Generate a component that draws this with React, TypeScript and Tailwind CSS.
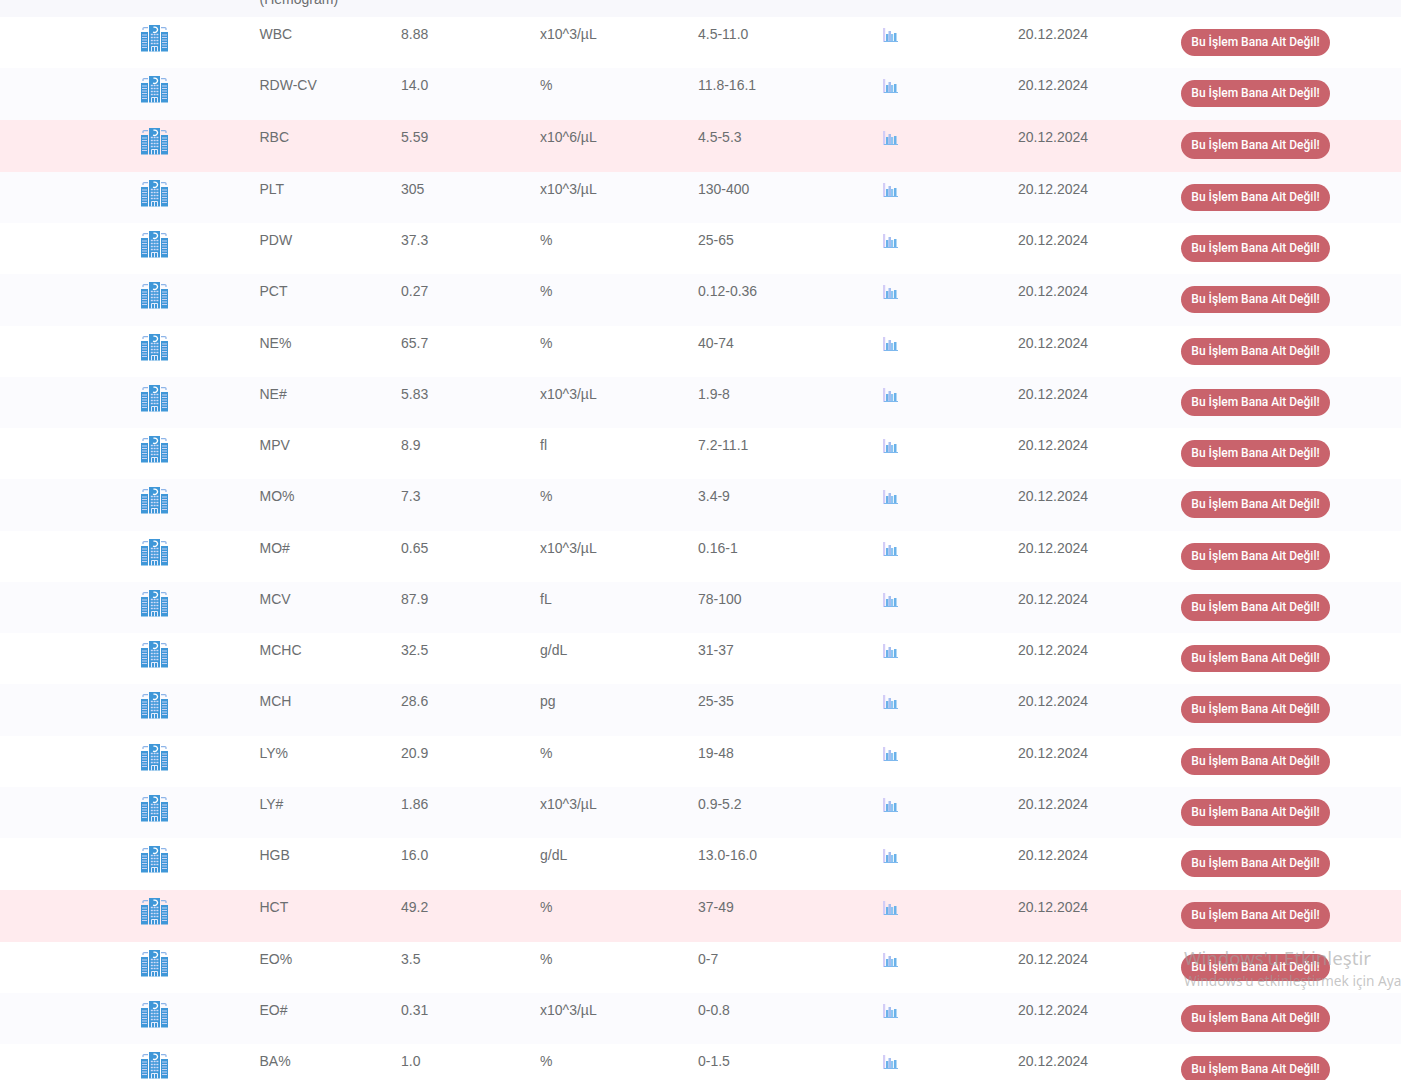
const rows: [string, string, string, string, boolean?][] = [
  ["WBC", "8.88", "x10^3/µL", "4.5-11.0"],
  ["RDW-CV", "14.0", "%", "11.8-16.1"],
  ["RBC", "5.59", "x10^6/µL", "4.5-5.3", true],
  ["PLT", "305", "x10^3/µL", "130-400"],
  ["PDW", "37.3", "%", "25-65"],
  ["PCT", "0.27", "%", "0.12-0.36"],
  ["NE%", "65.7", "%", "40-74"],
  ["NE#", "5.83", "x10^3/µL", "1.9-8"],
  ["MPV", "8.9", "fl", "7.2-11.1"],
  ["MO%", "7.3", "%", "3.4-9"],
  ["MO#", "0.65", "x10^3/µL", "0.16-1"],
  ["MCV", "87.9", "fL", "78-100"],
  ["MCHC", "32.5", "g/dL", "31-37"],
  ["MCH", "28.6", "pg", "25-35"],
  ["LY%", "20.9", "%", "19-48"],
  ["LY#", "1.86", "x10^3/µL", "0.9-5.2"],
  ["HGB", "16.0", "g/dL", "13.0-16.0"],
  ["HCT", "49.2", "%", "37-49", true],
  ["EO%", "3.5", "%", "0-7"],
  ["EO#", "0.31", "x10^3/µL", "0-0.8"],
  ["BA%", "1.0", "%", "0-1.5"],
];

function Hospital() {
  return (
    <svg width="27" height="27" viewBox="0 0 27 27" className="block">
      <path d="M0 7h7v19.5H0zM20 7h7v19.5h-7zM8 0h11v26.5H8z" fill="#3f97d8" />
      <path d="M2 5V3.6A1 1 0 0 1 3 2.6h4M25 5V3.6a1 1 0 0 0-1-1h-4" fill="none" stroke="#8db4e8" strokeWidth="1.2" />
      <path d="M12.5 2.2c3.4-.6 4.6 2 3.8 3.6-.7 1.5-2.6 2-4.3 1.4" fill="none" stroke="#fff" strokeWidth="1.4" />
      <path d="M1 10h5M1 12.5h5M1 15h5M1 17.5h5M1 20h5M1 22.5h5M21 10h5M21 12.5h5M21 15h5M21 17.5h5M21 20h5M21 22.5h5" stroke="#c3d2f5" strokeWidth="1" />
      <path d="M9.8 9.5h2M12.6 9.5h2M15.4 9.5h2M9.8 12.5h2M12.6 12.5h2M15.4 12.5h2M9.8 15.5h2M12.6 15.5h2M15.4 15.5h2M9.8 18.5h2M12.6 18.5h2M15.4 18.5h2" stroke="#d3dcf9" strokeWidth="1.6" />
      <path d="M10.5 26.5v-5h6v5M13.5 21.5v5" fill="none" stroke="#e6ecfc" strokeWidth="1" />
    </svg>
  );
}

function Chart() {
  return (
    <svg width="15" height="14" viewBox="0 0 15 14" className="block">
      <rect x="0" y="0" width="2.2" height="14" fill="#d3cdf7" />
      <rect x="3" y="6" width="2.5" height="7" fill="#6ab2ea" />
      <rect x="5.5" y="3" width="2.5" height="10" fill="#a4bdf0" />
      <rect x="8" y="6" width="2.2" height="7" fill="#8cc6f2" />
      <rect x="11" y="5" width="2.5" height="8" fill="#6ab2ea" />
      <rect x="1" y="13" width="14" height="1" fill="#7db8ee" />
    </svg>
  );
}

function Cell({ className, children }: { className: string; children: React.ReactNode }) {
  return <div className={className}>{children}</div>;
}

export default function App() {
  return (
    <div className="relative h-[1080px] overflow-hidden bg-white font-['Liberation_Sans',Arial,sans-serif] text-[14px] leading-5 text-[#6b6e70]">
      <div className="flex h-[17.12px] items-end overflow-hidden bg-[#f8f8fc] pl-[259.5px]">
        <span className="mb-[8px] whitespace-nowrap">(Hemogram)</span>
      </div>
      {rows.map(([name, value, unit, range, high], i) => (
        <div
          key={name}
          className={
            "flex items-start " +
            (high ? "h-[52px] bg-[#ffebee]" : i % 2 === 0 ? "h-[51.29px] bg-white" : "h-[51.29px] bg-[#fbfbfe]")
          }
        >
          <Cell className="w-[259.5px] shrink-0 pl-[141px] pt-2">
            <Hospital />
          </Cell>
          <Cell className="w-[141.5px] shrink-0 pt-[7px]">{name}</Cell>
          <Cell className="w-[139px] shrink-0 pt-[7px]">{value}</Cell>
          <Cell className="w-[158px] shrink-0 pt-[7px]">{unit}</Cell>
          <Cell className="w-[185px] shrink-0 pt-[7px]">{range}</Cell>
          <Cell className="w-[135px] shrink-0 pt-[11px]">
            <Chart />
          </Cell>
          <Cell className="w-[163px] shrink-0 pt-[7px]">20.12.2024</Cell>
          <button className="mt-3 h-[27px] w-[149px] shrink-0 rounded-full bg-[#c9636c] text-center font-['Roboto',sans-serif] text-[12px] font-medium leading-[25px] text-white">
            Bu İşlem Bana Ait Değil!
          </button>
        </div>
      ))}
      <div className="pointer-events-none absolute left-[1184px] top-[944px] whitespace-nowrap font-['Noto_Sans',sans-serif] text-[#a0a0a0]/60">
        <div className="text-[18.7px] leading-[27px]">Windows'u Etkinleştir</div>
        <div className="text-[13.7px] leading-[19px]">Windows'u etkinleştirmek için Ayarlar'a gidin.</div>
      </div>
    </div>
  );
}
